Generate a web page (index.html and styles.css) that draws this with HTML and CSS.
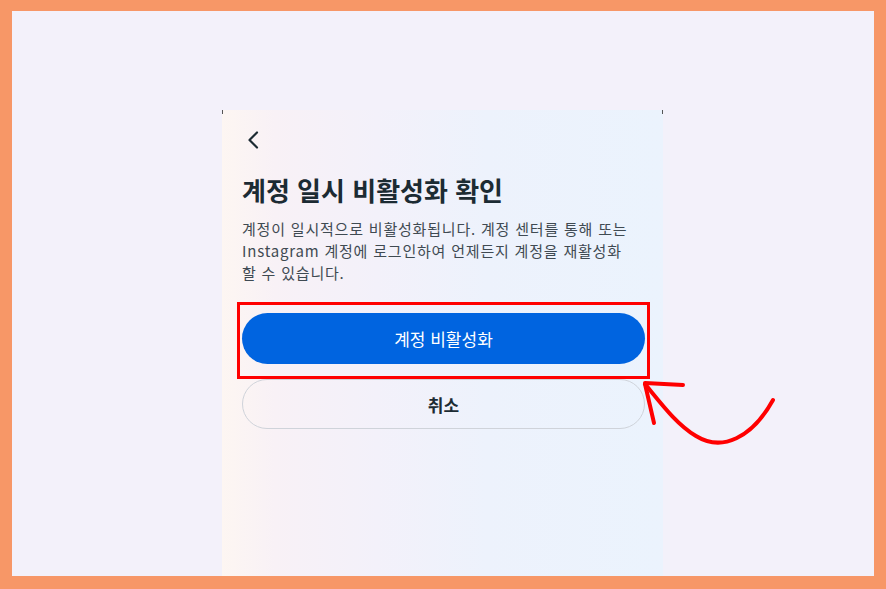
FILE: index.html
```html
<!DOCTYPE html>
<html lang="ko">
<head>
<meta charset="utf-8">
<title>계정 일시 비활성화 확인</title>
<link rel="stylesheet" href="styles.css">
</head>
<body>
<div class="frame">
  <div class="panel">
    <div class="back">
      <svg width="14" height="18" viewBox="0 0 14 18"><path d="M11 1.5 L3.5 9 L11 16.5" fill="none" stroke="#1c2b33" stroke-width="2.2" stroke-linecap="round" stroke-linejoin="round"/></svg>
    </div>
    <h1 class="title">계정 일시 비활성화 확인</h1>
    <p class="desc">계정이 일시적으로 비활성화됩니다. 계정 센터를 통해 또는<br>Instagram 계정에 로그인하여 언제든지 계정을 재활성화<br>할 수 있습니다.</p>
    <div class="actions">
      <button class="btn primary">계정 비활성화</button>
      <button class="btn secondary">취소</button>
    </div>
    <div class="highlight"></div>
  </div>
  <svg class="arrow" width="886" height="589" viewBox="0 0 886 589">
    <path d="M773 400 C752 438 722 452 696 436 C676 424 660 402 645 384" fill="none" stroke="#f00" stroke-width="4" stroke-linecap="round"/>
    <path d="M645 383 L683 385 M645 384 L654 423" fill="none" stroke="#f00" stroke-width="4" stroke-linecap="round"/>
  </svg>
</div>
</body>
</html>
```

FILE: styles.css
```css
* { box-sizing: border-box; }
html, body { margin: 0; padding: 0; }
body {
  width: 886px;
  height: 589px;
  font-family: "Noto Sans CJK KR", "Noto Sans", sans-serif;
  overflow: hidden;
}
.frame {
  position: relative;
  width: 886px;
  height: 589px;
  background: #f3f1fa;
  border-style: solid;
  border-color: #f79767;
  border-width: 11px 12px 13px 12px;
  display: flex;
  justify-content: center;
  padding-top: 99px;
}
.panel {
  position: relative;
  width: 441px;
  height: 466px;
  margin-left: -1px;
  padding: 18px 19px 0 20px;
  background: linear-gradient(90deg, #fdf6f2 0%, #f8f1f6 12%, #f3f1fa 35%, #edf2fc 60%, #ebf3fd 100%);
  display: flex;
  flex-direction: column;
}
.panel::before, .panel::after {
  content: "";
  position: absolute;
  top: 0;
  width: 1px;
  height: 4px;
  background: #555;
}
.panel::before { left: 0; }
.panel::after { right: 0; }
.back {
  height: 24px;
  display: flex;
  align-items: center;
  padding-left: 4px;
}
.title {
  margin: 22px 0 0;
  font-size: 26px;
  line-height: 32px;
  font-weight: 700;
  color: #1c2b33;
}
.desc {
  margin: 12px 0 0;
  font-size: 15px;
  line-height: 22px;
  letter-spacing: 0.8px;
  color: #3f4a52;
  white-space: nowrap;
}
.actions {
  margin-top: 29px;
  display: flex;
  flex-direction: column;
  gap: 15px;
}
.btn {
  width: 403px;
  border-radius: 26px;
  font-family: inherit;
  font-size: 17px;
  cursor: pointer;
}
.primary {
  height: 51px;
  background: #0064e0;
  border: none;
  color: #fff;
  font-weight: 400;
}
.secondary {
  height: 50px;
  background: transparent;
  border: 1px solid #cfd3da;
  color: #1c2b33;
  font-weight: 700;
}
.highlight {
  position: absolute;
  left: 15px;
  top: 192px;
  width: 413px;
  height: 77px;
  border: 3px solid #f00;
}
.arrow {
  position: absolute;
  left: -12px;
  top: -11px;
  pointer-events: none;
}
```
